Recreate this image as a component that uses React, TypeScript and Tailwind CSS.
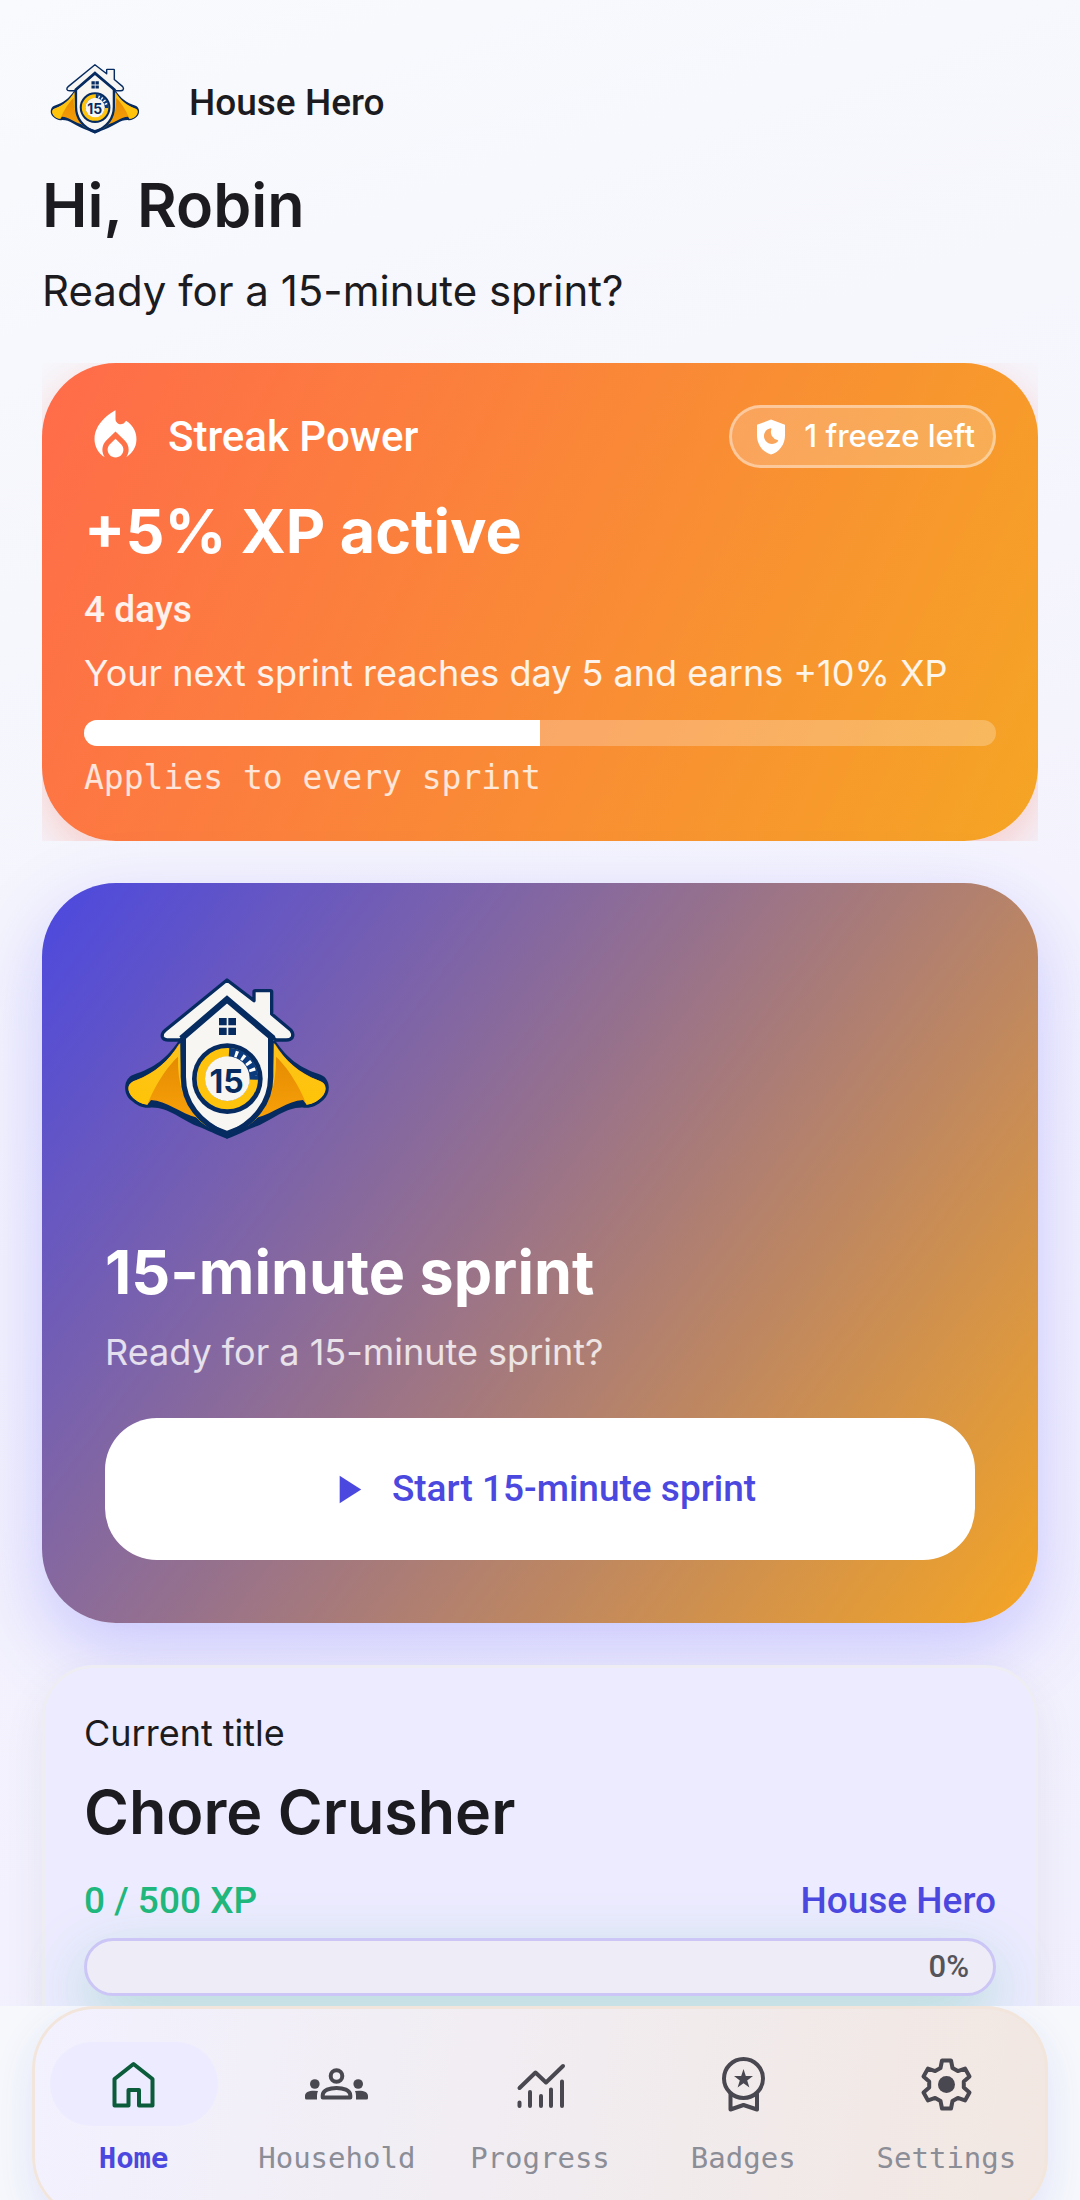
import type { ReactNode } from "react"
import { MdLocalFireDepartment, MdPlayArrow, MdShieldMoon } from "react-icons/md"

function Logo({ className }: { className: string }) {
  return (
    <svg viewBox="15 -12 726 726" className={className} role="img" aria-label="House Hero logo">
      <defs>
        <linearGradient id="capeFold" x1="0" y1="0" x2="0" y2="1">
          <stop offset="0" stopColor="#e08600" />
          <stop offset="1" stopColor="#fba50a" />
        </linearGradient>
        <linearGradient id="capeTop" x1="0" y1="0" x2="0" y2="1">
          <stop offset="0" stopColor="#fdc21c" />
          <stop offset="1" stopColor="#fec500" />
        </linearGradient>
      </defs>
      {/* cape, drawn once and mirrored */}
      {[0, 1].map((side) => (
        <g key={side} transform={side ? "translate(762 0) scale(-1 1)" : undefined}>
          <path
            d="M236 272C200 325 165 352 100 374C70 385 68 430 92 450C112 468 132 476 150 473C205 470 240 508 290 528C325 540 350 556 381 566V300Z"
            fill="#062b61"
          />
          <path
            d="M238 280C205 335 165 368 108 391C84 398 80 416 92 435C104 452 124 462 142 464L153 450C200 452 240 490 292 503L345 540L300 500C262 455 246 400 241 340Z"
            fill="url(#capeFold)"
          />
          <path
            d="M241 278C205 335 165 368 108 391C84 398 80 416 92 435C104 452 124 462 142 464C155 430 190 360 234 320C232 400 252 460 290 503C305 520 325 533 342 538C290 495 256 440 243 370Z"
            fill="url(#capeTop)"
          />
        </g>
      ))}
      {/* shield */}
      <path
        d="M250 240V380C250 460 300 520 381 555C462 520 512 460 512 380V240L381 140Z"
        fill="#f8f6f3"
        stroke="#062b61"
        strokeWidth="16"
        strokeLinejoin="round"
      />
      <path d="M320 520Q350 530 381 542Q412 530 442 520L381 566Z" fill="#062b61" />
      {/* roof and chimney */}
      <path
        d="M381 90L462 152V125Q462 122 466 122H511Q515 122 515 126V192L573 241Q582 252 576 263Q570 271 556 270H528L381 151L240 270H207Q190 270 187 260Q185 250 196 241Z"
        fill="#f8f6f3"
        stroke="#062b61"
        strokeWidth="10"
        strokeLinejoin="round"
      />
      <path d="M244 266L381 148L520 266" fill="none" stroke="#062b61" strokeWidth="19" />
      <path d="M357 204h23v22h-23zM385 204h23v22h-23zM357 233h23v22h-23zM385 233h23v22h-23z" fill="#062b61" />
      {/* timer dial */}
      <circle cx="382" cy="386" r="106" fill="#062b61" />
      <circle cx="382" cy="386" r="79" fill="none" stroke="#fdc30d" strokeWidth="26" />
      <path d="M387 307A79 79 0 0 1 461 389" fill="none" stroke="#0b3b7d" strokeWidth="28" />
      <path d="M405 311A79 79 0 0 1 461 378" fill="none" stroke="#fff" strokeWidth="19" strokeDasharray="9 14" />
      <circle cx="382" cy="386" r="67" fill="#f8f6f3" />
      <text
        x="380"
        y="428"
        textAnchor="middle"
        fontFamily="Inter, sans-serif"
        fontWeight="700"
        fontSize="96"
        fill="#062b61"
      >
        15
      </text>
    </svg>
  )
}

function NavIcon({ children }: { children: ReactNode }) {
  return (
    <svg
      viewBox="0 0 63 63"
      className="size-[63px]"
      fill="none"
      stroke="currentColor"
      strokeWidth="4"
      strokeLinecap="round"
      strokeLinejoin="round"
      aria-hidden="true"
    >
      {children}
    </svg>
  )
}

const navItems = [
  {
    label: "Home",
    active: true,
    icon: (
      <NavIcon>
        <path d="M12.5 26L31.5 11L50.5 26V52.5H37V37H26.5V52.5H12.5Z" />
      </NavIcon>
    ),
  },
  {
    label: "Household",
    icon: (
      <NavIcon>
        <circle cx="31.5" cy="23" r="5.8" />
        <path d="M17.7 44.5V42.5C17.7 37 25 35 31.5 35S45.3 37 45.3 42.5V44.5Z" />
        <g fill="currentColor" stroke="none">
          <circle cx="9.8" cy="31" r="4.8" />
          <circle cx="53.2" cy="31" r="4.8" />
          <path d="M1.5 46.5Q0 46.5 0 45V43C0 39.5 3.5 37.7 9 37.7Q11 37.7 13 38Q12 40 12 42.5V46.5Z" />
          <path d="M61.5 46.5Q63 46.5 63 45V43C63 39.5 59.5 37.7 54 37.7Q52 37.7 50 38Q51 40 51 42.5V46.5Z" />
        </g>
      </NavIcon>
    ),
  },
  {
    label: "Progress",
    icon: (
      <NavIcon>
        <path d="M10.5 35L26.5 19.5L37 29.5L54 13" />
        <path d="M10.5 49.5V53M21 39V53M32 43V53M42 36.5V53M53 28.5V53" />
      </NavIcon>
    ),
  },
  {
    label: "Badges",
    icon: (
      <NavIcon>
        <circle cx="31.5" cy="25.5" r="19.5" />
        <path d="M18.5 41V56.5L31.5 52L45 56.5V41" />
        <path
          d="M31.5 16L33.8 23H41L35.2 27.4L37.4 34.5L31.5 30.2L25.6 34.5L27.8 27.4L22 23H29.2Z"
          fill="currentColor"
          stroke="none"
        />
      </NavIcon>
    ),
  },
  {
    label: "Settings",
    icon: (
      <NavIcon>
        <g transform="translate(31.5 31.5)">
          <path d="M-6 -16.5L-4.5 -24H4.5L6 -16.5L11.3 -13.4L18.5 -15.9L23 -8.1L17.3 -3.1V3.1L23 8.1L18.5 15.9L11.3 13.4L6 16.5L4.5 24H-4.5L-6 16.5L-11.3 13.4L-18.5 15.9L-23 8.1L-17.3 3.1V-3.1L-23 -8.1L-18.5 -15.9L-11.3 -13.4Z" />
          <circle r="8.5" fill="currentColor" stroke="none" />
        </g>
      </NavIcon>
    ),
  },
]

export default function App() {
  return (
    <div className="flex h-screen flex-col overflow-hidden bg-linear-160 from-[#f8fafd] via-[#f4f3fd] to-[#f1effe] font-['Roboto',sans-serif] text-[#1c1b20]">
      <main className="min-h-0 flex-1 overflow-hidden px-[42px] pt-[50px]">
        <header>
          <div className="flex items-center gap-[42px]">
            <Logo className="size-[105px]" />
            <span className="text-[37px] leading-[52px] font-medium">House Hero</span>
          </div>
          <h1 className="mt-2 font-['Inter',sans-serif] text-[61px] leading-[84px] font-semibold">Hi, Robin</h1>
          <p className="mt-3 font-['Inter',sans-serif] text-[42px] leading-[63px]">Ready for a 15-minute sprint?</p>
        </header>

        {/* clips the glow of the streak card to its own box */}
        <div className="mt-[41px] overflow-hidden">
          <section className="rounded-[74px] bg-[linear-gradient(116deg,#ff6b4a,#f5a524)] p-[42px] text-white shadow-[0_16px_48px_rgba(255,107,74,0.3)]">
            <div className="flex items-center justify-between">
              <h2 className="flex items-center gap-[21px] text-[42px] leading-[63px] font-medium">
                <MdLocalFireDepartment className="size-[63px]" />
                Streak Power
              </h2>
              <span className="flex h-[63px] items-center gap-3 rounded-full border-[3px] border-white/40 bg-white/20 px-[18px] font-['Inter',sans-serif] text-[31px] font-medium">
                <MdShieldMoon className="size-[42px]" />
                1 freeze left
              </span>
            </div>
            <p className="mt-[21px] font-['Inter',sans-serif] text-[61px] leading-[84px] font-bold">+5% XP active</p>
            <p className="mt-[11px] text-[37px] leading-[52px] font-medium text-white/90">4 days</p>
            <p className="mt-[11px] font-['Inter',sans-serif] text-[36px] leading-[52px] text-white/90">
              Your next sprint reaches day 5 and earns +10% XP
            </p>
            <div className="mt-[21px] h-[26px] overflow-hidden rounded-full bg-white/25">
              <div className="h-full w-1/2 bg-white" />
            </div>
            <p className="mt-[11px] font-['DejaVu_Sans_Mono',monospace] text-[33px] leading-[42px] text-white/80">
              Applies to every sprint
            </p>
          </section>
        </div>

        <section className="mt-[42px] rounded-[74px] bg-[linear-gradient(127deg,#4b48e0,#f5a524)] p-[63px] text-white shadow-[0_26px_74px_rgba(90,86,255,0.28)]">
          <Logo className="size-[242px]" />
          <h2 className="mt-[42px] font-['Inter',sans-serif] text-[61px] leading-[84px] font-bold">15-minute sprint</h2>
          <p className="mt-3 font-['Inter',sans-serif] text-[36px] leading-[52px] text-white/80">
            Ready for a 15-minute sprint?
          </p>
          <button
            type="button"
            className="mt-10 flex h-[142px] w-full items-center justify-center gap-[21px] rounded-[52px] bg-white text-[37px] font-medium text-[#4b48e0]"
          >
            <MdPlayArrow className="size-[47px]" />
            Start 15-minute sprint
          </button>
        </section>

        <section className="mt-[42px] rounded-[52px] border-[3px] border-[#ededf3] bg-[#edebff] p-[39px] pb-20 shadow-[0_16px_42px_rgba(60,60,90,0.08)]">
          <p className="font-['Inter',sans-serif] text-[36px] leading-[52px]">Current title</p>
          <h2 className="mt-[11px] font-['Inter',sans-serif] text-[61px] leading-[84px] font-semibold">
            Chore Crusher
          </h2>
          <div className="mt-[21px] flex justify-between text-[37px] leading-[52px] font-medium">
            <span className="text-[#20b77c]">0 / 500 XP</span>
            <span className="text-[#4b48e0]">House Hero</span>
          </div>
          <div
            role="progressbar"
            aria-label="XP"
            aria-valuenow={0}
            className="mt-[11px] flex h-[58px] items-center justify-end rounded-full border-[3px] border-[#cbc6f5] bg-[#edecf7] px-6 text-[31px] font-medium text-[#55545a] shadow-[0_21px_63px_rgba(32,183,124,0.3)]"
          >
            0%
          </div>
        </section>
      </main>

      <footer className="h-[194px] shrink-0 overflow-hidden bg-[#f6f8fc] px-8">
        <nav className="flex h-[214px] rounded-[63px] bg-[linear-gradient(100deg,#f2f1fe,#f1edf2_45%,#f2e7e1)] shadow-[inset_0_0_0_3px_#f2e6dc,0_16px_42px_rgba(76,72,224,0.12)]">
          {navItems.map((item) => (
            <a key={item.label} href="#" className="flex flex-1 flex-col items-center gap-[11px] pt-9">
              <span
                className={
                  item.active
                    ? "flex h-[84px] w-[168px] items-center justify-center rounded-full bg-[#edebff] text-[#0b5c3a]"
                    : "flex h-[84px] w-[168px] items-center justify-center text-[#49474f]"
                }
              >
                {item.icon}
              </span>
              <span
                className={
                  item.active
                    ? "font-['DejaVu_Sans_Mono',monospace] text-[29px] leading-[42px] font-bold text-[#4b48e0]"
                    : "font-['DejaVu_Sans_Mono',monospace] text-[29px] leading-[42px] text-[#8b8d97]"
                }
              >
                {item.label}
              </span>
            </a>
          ))}
        </nav>
      </footer>
    </div>
  )
}
